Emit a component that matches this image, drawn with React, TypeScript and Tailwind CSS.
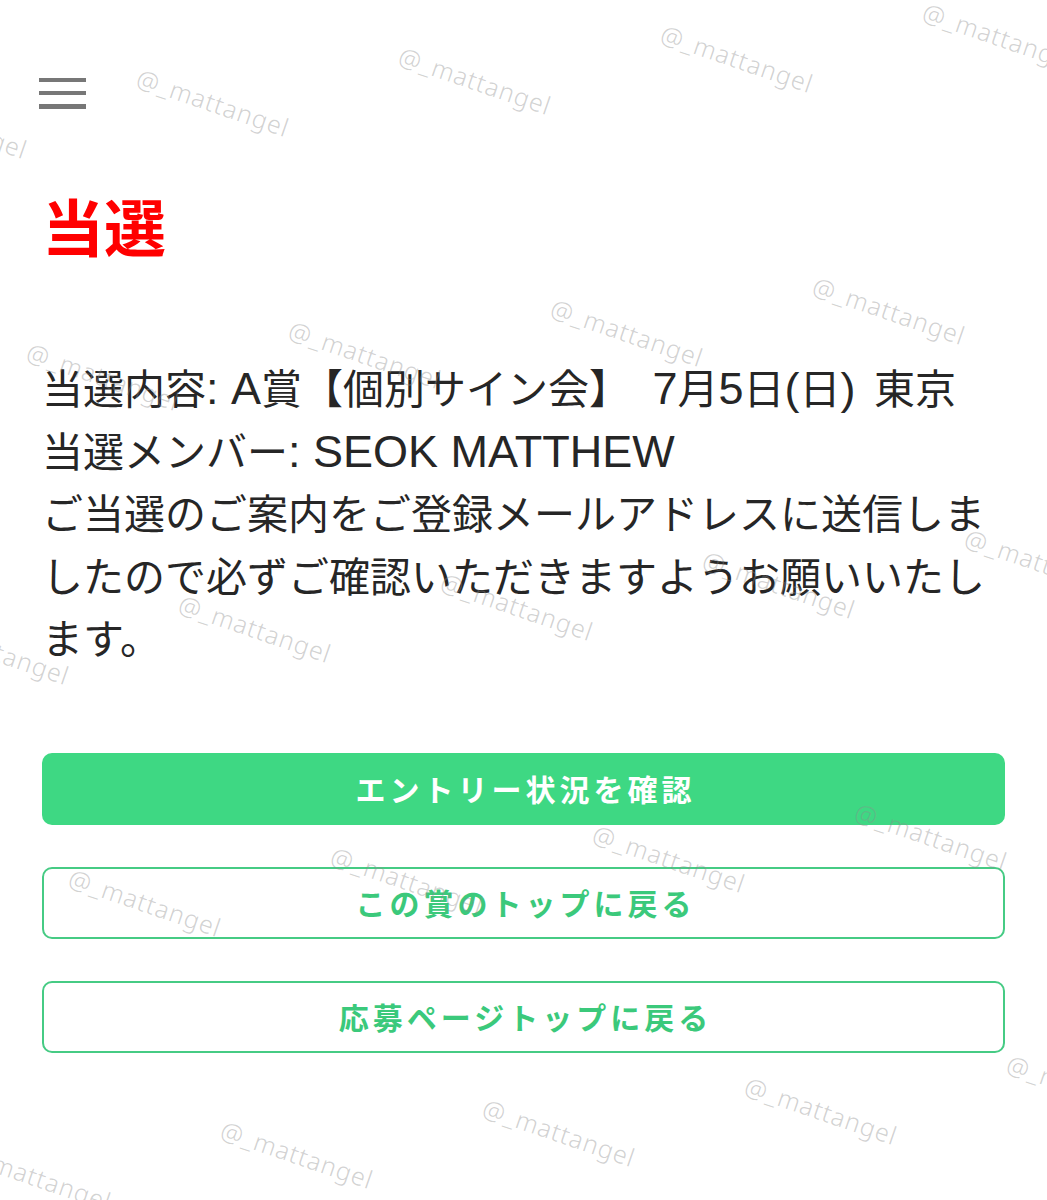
import React from "react";

const marks: [number, number][] = [
  [-127, 90], [135, 68], [397, 46], [659, 24], [921, 2],
  [25, 342], [287, 320], [549, 298], [811, 276],
  [-85, 616], [177, 594], [439, 572], [701, 550], [963, 528],
  [67, 868], [329, 846], [591, 824], [853, 802],
  [-43, 1142], [219, 1120], [481, 1098], [743, 1076], [1005, 1054],
];

function L({ children, className = "" }: { children: React.ReactNode; className?: string }) {
  return <span className={"text-[45px] leading-[60px] " + className}>{children}</span>;
}

export default function App() {
  return (
    <div
      className="relative w-full min-h-[1200px] overflow-hidden bg-white"
      style={{ fontFamily: '"Liberation Sans", "Noto Sans CJK JP", sans-serif' }}
    >
      <header className="pl-[39px] pt-[78px]">
        <div className="flex w-[47px] flex-col gap-[9px]">
          <div className="h-[4px] w-full bg-[#777777]" />
          <div className="h-[4px] w-full bg-[#777777]" />
          <div className="h-[5px] w-full bg-[#777777]" />
        </div>
      </header>

      <main className="px-[42px]">
        <h1 className="mt-[80px] text-[62px] font-bold leading-[72px] text-[#ff0000] [font-family:'Noto_Sans_CJK_JP',sans-serif]">
          当選
        </h1>

        <div className="mt-[98px] text-[41px] leading-[62.5px] text-[#262626]">
          <p>
            当選内容<L>: A</L>賞【個別サイン会】<L className="pl-[10px]"> 7</L>月<L>5</L>日<L>(</L>日<L className="pr-[6px]">) </L>東京
          </p>
          <p>
            当選メンバー<L>: SEOK MATTHEW</L>
          </p>
          <p>ご当選のご案内をご登録メールアドレスに送信しましたので必ずご確認いただきますようお願いいたします。</p>
        </div>

        <div className="mt-[81px] flex flex-col gap-[42px] [font-family:'Noto_Sans_CJK_JP',sans-serif]">
          <button className="flex h-[72px] w-full items-center justify-center rounded-[10px] bg-[#3ed883] pl-[4px] text-[30px] font-bold tracking-[4px] text-white">
            エントリー状況を確認
          </button>
          <button className="flex h-[72px] w-full items-center justify-center rounded-[10px] border-2 border-[#46cb84] bg-white pl-[4px] text-[30px] font-bold tracking-[4px] text-[#3bc97b]">
            この賞のトップに戻る
          </button>
          <button className="flex h-[72px] w-full items-center justify-center rounded-[10px] border-2 border-[#46cb84] bg-white pl-[4px] text-[30px] font-bold tracking-[4px] text-[#3bc97b]">
            応募ページトップに戻る
          </button>
        </div>
      </main>

      {marks.map(([x, y], i) => (
        <span
          key={i}
          className="pointer-events-none absolute origin-top-left rotate-[19deg] whitespace-nowrap text-[25px] font-light leading-[30px] tracking-[1px] text-[rgba(140,140,140,0.4)] [font-family:'Noto_Sans',sans-serif]"
          style={{ left: x + 8, top: y - 6 }}
        >
          @_mattangel
        </span>
      ))}
    </div>
  );
}
